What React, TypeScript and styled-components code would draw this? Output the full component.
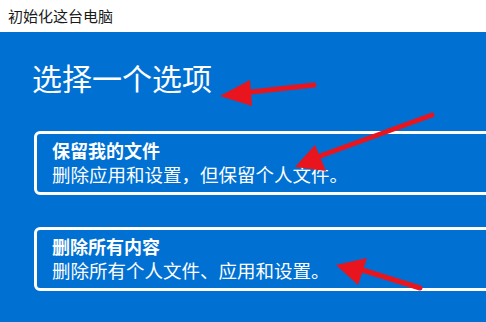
import styled, { createGlobalStyle } from "styled-components";

const GlobalStyle = createGlobalStyle`
	html, body {
		margin: 0;
		padding: 0;
		overflow: hidden;
	}
	body {
		font-family: "Noto Sans CJK SC", "Noto Sans", sans-serif;
	}
`;

const Window = styled.div`
	position: relative;
	display: flex;
	flex-direction: column;
	width: 486px;
	height: 322px;
	overflow: hidden;
	background-color: #0071d3;
`;

const TitleBar = styled.div`
	display: flex;
	align-items: center;
	height: 32px;
	padding: 0 0 2px 8px;
	box-sizing: border-box;
	background-color: #ffffff;
	color: #1a1a1a;
	font-size: 15px;
`;

const Panel = styled.div`
	display: flex;
	flex-direction: column;
	flex: 1;
	padding: 25px 0 0 34px;
	color: #ffffff;
`;

const Heading = styled.h1`
	margin: 0 0 34px -2px;
	font-size: 30px;
	font-weight: 400;
	line-height: 40px;
`;

const Options = styled.div`
	display: flex;
	flex-direction: column;
	gap: 32px;
`;

const Option = styled.button`
	display: flex;
	flex-direction: column;
	align-items: flex-start;
	gap: 2px;
	width: 480px;
	padding: 5px 0 6px 15px;
	background: transparent;
	border: 3px solid #ffffff;
	border-radius: 6px;
	color: #ffffff;
	font-family: inherit;
	text-align: left;
	cursor: pointer;
`;

const OptionTitle = styled.span`
	font-size: 18px;
	font-weight: 700;
	line-height: 22px;
`;

const OptionText = styled.span`
	font-size: 18.5px;
	font-weight: 400;
	line-height: 23px;
`;

const Annotations = styled.svg`
	position: absolute;
	inset: 0;
	pointer-events: none;
`;

const RED = "#e8141e";

export default function App() {
	return (
		<>
			<GlobalStyle />
			<Window>
				<TitleBar>初始化这台电脑</TitleBar>
				<Panel>
					<Heading>选择一个选项</Heading>
					<Options>
						<Option>
							<OptionTitle>保留我的文件</OptionTitle>
							<OptionText>删除应用和设置，但保留个人文件。</OptionText>
						</Option>
						<Option>
							<OptionTitle>删除所有内容</OptionTitle>
							<OptionText>删除所有个人文件、应用和设置。</OptionText>
						</Option>
					</Options>
				</Panel>
				<Annotations width="486" height="322" viewBox="0 0 486 322">
					<line x1="314" y1="85" x2="242" y2="93" stroke={RED} strokeWidth="5" strokeLinecap="round" />
					<polygon points="220,96 250,80 252,106" fill={RED} />
					<line x1="432" y1="115" x2="312" y2="159" stroke={RED} strokeWidth="5" strokeLinecap="round" />
					<polygon points="295,167 315,145 326,171" fill={RED} />
					<line x1="420" y1="288" x2="356" y2="268" stroke={RED} strokeWidth="5" strokeLinecap="round" />
					<polygon points="336,265 367,258 358,285" fill={RED} />
				</Annotations>
			</Window>
		</>
	);
}
